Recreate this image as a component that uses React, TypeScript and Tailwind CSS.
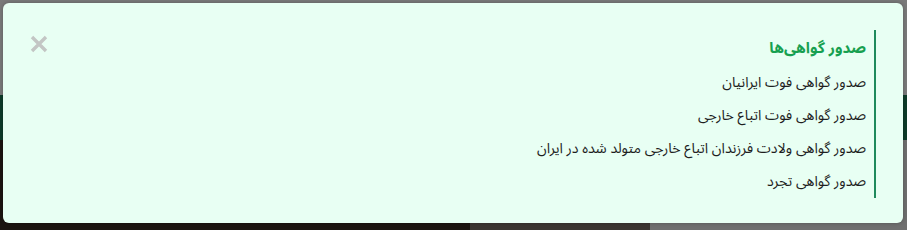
import React from 'react';

const ITEMS = [
  'صدور گواهی فوت ایرانیان',
  'صدور گواهی فوت اتباع خارجی',
  'صدور گواهی ولادت فرزندان اتباع خارجی متولد شده در ایران',
  'صدور گواهی تجرد',
];

export default function App() {
  return (
    <div
      className="relative w-[907px] h-[230px] overflow-hidden"
      style={{ fontFamily: '"Noto Sans Arabic", "DejaVu Sans", sans-serif' }}
    >
      {/* صفحه‌ی پشت مودال، زیر پوشش تیره */}
      <div className="flex flex-col h-full">
        <div className="h-[95px] bg-[#7a7a7a]" />
        <div className="h-[45px] bg-[#0d3b29]" />
        <div className="flex-1 flex">
          <div className="w-[470px] bg-[#1c1410]" />
          <div className="w-[180px] bg-[#3a3530]" />
          <div className="flex-1 bg-[#6f6f6f]" />
        </div>
      </div>

      {/* مودال */}
      <div className="absolute left-[3px] top-[3px] w-[900px] h-[220px] rounded-[6px] bg-[#e8fff3] shadow-[0_0_4px_rgba(0,0,0,0.25)] flex justify-between pl-[26px] pr-[27px] pt-[27px]">
        <button type="button" className="w-[20px] h-[20px] mt-[4px] flex items-center justify-center">
          <svg width="18" height="18" viewBox="0 0 18 18">
            <path d="M2 2 L16 16 M16 2 L2 16" stroke="#c3c6c4" strokeWidth="3.4" strokeLinecap="butt" />
          </svg>
        </button>

        <div dir="rtl" className="h-[168px] border-r-2 border-[#1f8a5c] pr-[8px] pt-[6px]">
          <p className="text-[15.2px] leading-[24px] font-bold text-[#17a050]">صدور گواهی‌ها</p>
          <ul className="mt-[6px]">
            {ITEMS.map((item) => (
              <li key={item} className="h-[33px] flex items-center text-[14.2px] text-[#1e1e1e]">
                {item}
              </li>
            ))}
          </ul>
        </div>
      </div>
    </div>
  );
}
